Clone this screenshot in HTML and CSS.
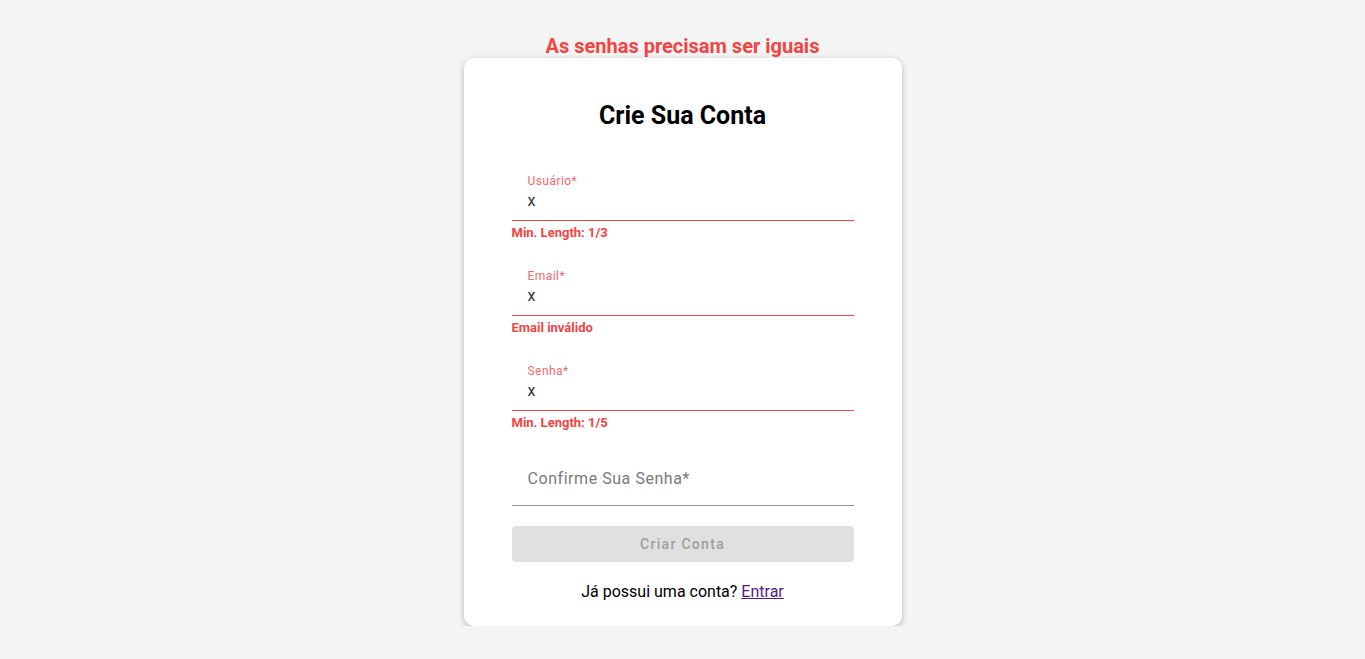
FILE: index.html
```html
<!DOCTYPE html>
<html lang="pt-BR">
<head>
<meta charset="utf-8">
<title>Crie Sua Conta</title>
<link rel="stylesheet" href="styles.css">
</head>
<body>
<main class="page">
  <p class="form-error">As senhas precisam ser iguais</p>
  <section class="card">
    <h1 class="card-title">Crie Sua Conta</h1>
    <form class="form">
      <div class="field">
        <div class="field-box is-error">
          <span class="field-label">Usuário*</span>
          <span class="field-value">x</span>
        </div>
        <p class="field-helper">Min. Length: 1/3</p>
      </div>
      <div class="field">
        <div class="field-box is-error">
          <span class="field-label">Email*</span>
          <span class="field-value">x</span>
        </div>
        <p class="field-helper">Email inválido</p>
      </div>
      <div class="field">
        <div class="field-box is-error">
          <span class="field-label">Senha*</span>
          <span class="field-value">x</span>
        </div>
        <p class="field-helper">Min. Length: 1/5</p>
      </div>
      <div class="field field-last">
        <div class="field-box is-empty">
          <span class="field-placeholder">Confirme Sua Senha*</span>
        </div>
      </div>
      <button type="button" class="submit" disabled>Criar Conta</button>
    </form>
    <p class="footer-text">Já possui uma conta? <a href="#" class="footer-link">Entrar</a></p>
  </section>
</main>
</body>
</html>
```

FILE: styles.css
```css
* { box-sizing: border-box; }

html, body {
  margin: 0;
  padding: 0;
  background: #f4f4f4;
  font-family: Roboto, "Liberation Sans", Arial, sans-serif;
}

.page {
  display: flex;
  flex-direction: column;
  align-items: center;
  padding-top: 34px;
}

.form-error {
  margin: 0;
  font-size: 20px;
  line-height: 24px;
  font-weight: 700;
  color: #f44343;
}

.card {
  width: 438px;
  background: #ffffff;
  border-radius: 10px;
  box-shadow: 0 2px 6px rgba(0, 0, 0, 0.25);
  padding: 0 48px 22px;
  display: flex;
  flex-direction: column;
}

.card-title {
  margin: 43px 0 0;
  font-size: 25px;
  line-height: 30px;
  font-weight: 700;
  color: #000;
  text-align: center;
}

.form {
  margin-top: 33px;
  display: flex;
  flex-direction: column;
}

.field {
  display: flex;
  flex-direction: column;
  margin-bottom: 16px;
}

.field-last {
  margin-bottom: 20px;
}

.field-box {
  height: 57px;
  padding: 10px 16px 0;
  display: flex;
  flex-direction: column;
  border-bottom: 1px solid #f44343;
}

.field-box.is-empty {
  border-bottom-color: #949494;
  justify-content: center;
  padding-top: 2px;
}

.field-label {
  font-size: 12px;
  line-height: 14px;
  color: #f56a6a;
  letter-spacing: 0.45px;
}

.field-value {
  margin-top: 3px;
  font-size: 16px;
  line-height: 19px;
  color: #333;
}

.field-placeholder {
  font-size: 16px;
  line-height: 19px;
  color: #7a7a7a;
  letter-spacing: 0.55px;
}

.field-helper {
  margin: 2px 0 0;
  font-size: 13px;
  line-height: 20px;
  font-weight: 700;
  color: #f44343;
}

.submit {
  height: 36px;
  border: none;
  border-radius: 4px;
  background: #e0e0e0;
  color: #9e9e9e;
  font-family: Roboto, "Liberation Sans", Arial, sans-serif;
  font-size: 14px;
  font-weight: 500;
  letter-spacing: 1.3px;
  cursor: default;
}

.footer-text {
  margin: 18px 0 0;
  font-size: 16px;
  line-height: 24px;
  color: #000;
  text-align: center;
}

.footer-link {
  color: #551a8b;
  text-decoration: underline;
}
```
